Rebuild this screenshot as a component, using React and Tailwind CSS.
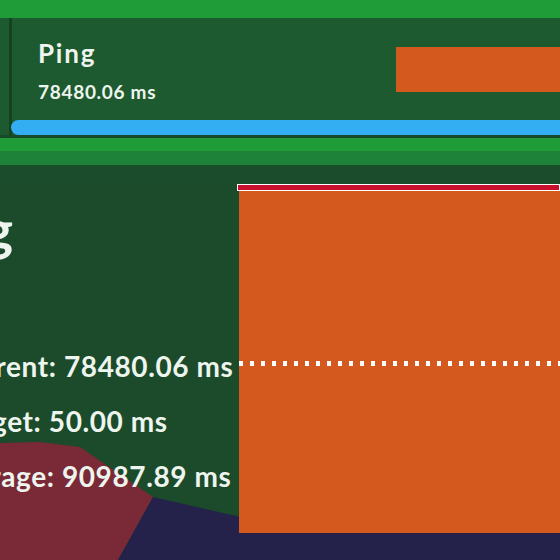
import React from 'react'

function Stat({ label, value, className = '' }) {
  return (
    <div className={`whitespace-nowrap text-[28px] font-bold leading-none tracking-[0.6px] text-[#eef5ee] ${className}`}>
      {label}: {value}
    </div>
  )
}

export default function App() {
  return (
    <div
      className="relative w-[560px] h-[560px] overflow-hidden bg-[#1b4b2b]"
      style={{ fontFamily: 'Lato, "Noto Sans", sans-serif' }}
    >
      {/* scenery behind the panel */}
      <svg className="absolute inset-0" width="560" height="560" viewBox="0 0 560 560">
        <polygon points="0,443 40,442 80,447 153,497 118,560 0,560" fill="#7a2936" />
        <polygon points="153,497 245,518 245,533 560,533 560,560 118,560" fill="#24224b" />
      </svg>

      <div className="relative flex flex-col">
        <div className="h-[18px] bg-[#1f9b37]" />

        {/* compact card */}
        <div className="flex h-[117px] bg-[#1d5a2f]">
          <div className="w-[9px]" />
          <div className="w-[3px] bg-[#16431f]" />
          <div className="flex flex-1 flex-col">
            <div className="flex flex-1">
              <div className="flex flex-col pl-[26px] pt-[22px] text-[#eef5ee]">
                <span className="text-[26px] font-bold leading-none tracking-[1.8px]">Ping</span>
                <span className="mt-[16px] text-[19px] font-bold leading-none tracking-[0.7px]">78480.06 ms</span>
              </div>
              <div className="ml-auto mt-[29px] h-[45px] w-[164px] bg-[#d4591f]" />
            </div>
            <div className="ml-[-1px] h-[15px] rounded-l-full bg-[#33aef2]" />
          </div>
        </div>
        <div className="h-[3px] bg-[#174a26]" />
        <div className="h-[13px] bg-[#1f9b37]" />
        <div className="h-[14px] bg-[#1e8239]" />
        <div className="h-[18px] bg-[#1b4d2c]" />

        {/* expanded view */}
        <div className="flex">
          <div className="relative w-[239px] flex-none">
            <div className="ml-[-97px] mt-[18px] whitespace-nowrap text-[56px] font-bold leading-none text-[#eef5ee]">
              Ping
            </div>
            <Stat label="Current" value="78480.06 ms" className="ml-[-51px] mt-[95px]" />
            <Stat label="Target" value="50.00 ms" className="ml-[-48px] mt-[27px]" />
            <Stat label="Average" value="90987.89 ms" className="ml-[-59px] mt-[27px]" />
          </div>
          <div className="flex flex-1 flex-col">
            <div className="mt-[1px] ml-[-2px] h-[7px] border border-white bg-[#c8102e]" />
            <div className="relative h-[342px] bg-[#d4591f]">
              <div className="absolute left-0 right-0 top-[170px] h-[5px] bg-[repeating-linear-gradient(90deg,#ffffff_0_4px,transparent_4px_11px)]" />
            </div>
          </div>
        </div>
      </div>
    </div>
  )
}
